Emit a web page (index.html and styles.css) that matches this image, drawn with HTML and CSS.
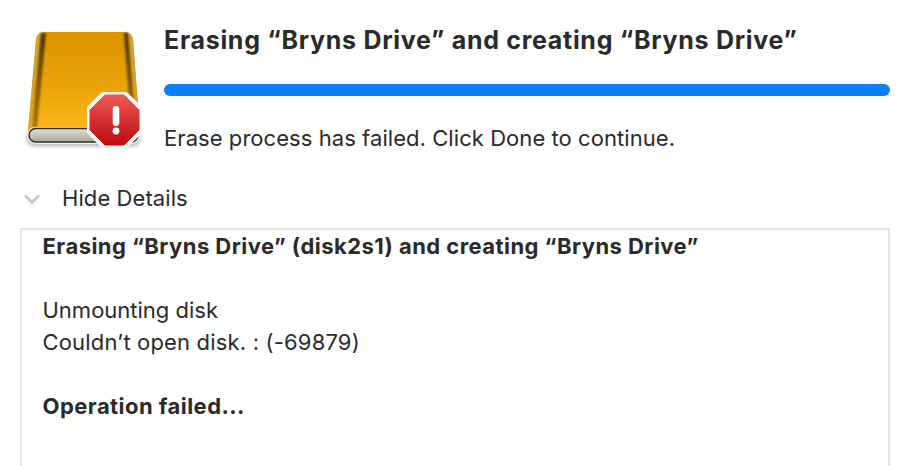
FILE: index.html
```html
<!DOCTYPE html>
<html lang="en">
<head>
<meta charset="utf-8">
<title>Erase</title>
<link rel="stylesheet" href="styles.css">
</head>
<body>
<div class="dialog">
  <header class="head">
    <div class="icon-cell">
      <svg class="drive" width="130" height="130" viewBox="20 24 130 130" aria-hidden="true">
        <defs>
          <linearGradient id="body" x1="0" y1="0" x2="0" y2="1">
            <stop offset="0" stop-color="#dc9400"/>
            <stop offset="0.55" stop-color="#eba309"/>
            <stop offset="1" stop-color="#fbb91f"/>
          </linearGradient>
          <linearGradient id="edgeL" x1="0" y1="0" x2="0" y2="1">
            <stop offset="0" stop-color="#4d3200"/>
            <stop offset="0.6" stop-color="#8a5c00"/>
            <stop offset="1" stop-color="#a87800"/>
          </linearGradient>
          <linearGradient id="base" x1="0" y1="0" x2="0" y2="1">
            <stop offset="0" stop-color="#e2e1da"/>
            <stop offset="1" stop-color="#a8a89e"/>
          </linearGradient>
          <linearGradient id="stopSign" x1="0" y1="0" x2="0" y2="1">
            <stop offset="0" stop-color="#ee5a54"/>
            <stop offset="1" stop-color="#bc090e"/>
          </linearGradient>
          <filter id="soft" x="-20%" y="-50%" width="140%" height="200%">
            <feGaussianBlur stdDeviation="1.500"/>
          </filter>
          <filter id="blurEdge" x="-100%" y="-5%" width="300%" height="110%">
            <feGaussianBlur stdDeviation="1"/>
          </filter>
        </defs>
        <rect x="26" y="130" width="115" height="17" rx="8.500" fill="#000" opacity="0.22" filter="url(#soft)"/>
        <path d="M36 40 Q37 32 46 32 H123 Q132 32 133 40 L140 131 H28 Z" fill="url(#body)"/>
        <path d="M36 40 Q37 32 44 32 L30 131 H28 Z" fill="#d8a32a"/>
        <path d="M133 40 Q132 32 125 32 L138 131 H140 Z" fill="#d8a32a"/>
        <path d="M41 33 L46 33 L37 128 L32 128 Z" fill="url(#edgeL)" filter="url(#blurEdge)"/>
        <path d="M124 33 L128 33 L136 128 L131 128 Z" fill="url(#edgeL)" filter="url(#blurEdge)"/>
        <rect x="27" y="127" width="113" height="17" rx="8.500" fill="#f2f2ec"/>
        <rect x="29" y="128.500" width="109" height="13.500" rx="6.750" fill="url(#base)" stroke="#2f2f2a" stroke-width="1.500"/>
        <path d="M104 92 H125 Q127 92 128.500 93.500 L140.500 105.500 Q142 107 142 109 V131 Q142 133 140.500 134.500 L128.500 146.500 Q127 148 125 148 H104 Q102 148 100.500 146.500 L88.500 134.500 Q87 133 87 131 V109 Q87 107 88.500 105.500 L100.500 93.500 Q102 92 104 92 Z" fill="#f7f7f7"/>
        <path d="M105 95 H124 L139 110 V130 L124 145 H105 L90 130 V110 Z" fill="url(#stopSign)" stroke="url(#stopSign)" stroke-width="1" stroke-linejoin="round"/>
        <rect x="112.700" y="106" width="6.600" height="20" rx="3.300" fill="#fff"/>
        <circle cx="116" cy="131" r="3.400" fill="#fff"/>
      </svg>
    </div>
    <div class="status">
      <h1 class="title">Erasing “Bryns Drive” and creating “Bryns Drive”</h1>
      <div class="bar"></div>
      <p class="message">Erase process has failed. Click Done to continue.</p>
    </div>
  </header>
  <div class="toggle">
    <svg class="chevron" width="18" height="12" viewBox="0 0 18 12" aria-hidden="true">
      <path d="M2 2.500 L9 9.500 L16 2.500" fill="none" stroke="#c4c4c4" stroke-width="2.500"/>
    </svg>
    <span class="toggle-label">Hide Details</span>
  </div>
  <section class="log">
    <p class="line strong">Erasing “Bryns Drive” (disk2s1) and creating “Bryns Drive”</p>
    <p class="line blank"></p>
    <p class="line">Unmounting disk</p>
    <p class="line figures">Couldn’t open disk. : (-69879)</p>
    <p class="line blank"></p>
    <p class="line strong">Operation failed...</p>
  </section>
</div>
</body>
</html>
```
FILE: styles.css
```css
* { box-sizing: border-box; }
html, body { margin: 0; height: 100%; background: #fff; overflow: hidden; }
body { font-family: Inter, "Liberation Sans", sans-serif; color: #2a2a2a; }
.dialog { height: 466px; padding: 24px 16px 0 20px; display: flex; flex-direction: column; }
.head { display: flex; height: 132px; }
.icon-cell { width: 144px; flex: none; }
.drive { display: block; }
.status { flex: 1; min-width: 0; }
.title { margin: 0; font-size: 25px; line-height: 32px; font-weight: 700; letter-spacing: 0.71px; }
.bar { margin-top: 28px; height: 12px; border-radius: 6px; background: #0880ff; }
.message { margin: 28px 0 0; font-size: 22px; line-height: 28px; letter-spacing: 0.06px; }
.toggle { display: flex; align-items: center; height: 30px; margin-top: 27px; }
.chevron { flex: none; margin: 2px 0 0 3px; }
.toggle-label { margin-left: 21px; font-size: 22px; line-height: 28px; letter-spacing: 0.08px; }
.log { flex: 1; margin-top: 15px; border: 2px solid #e3e3e3; border-bottom: 0; padding: 0 20.5px; }
.line { margin: 0; font-size: 22px; line-height: 32px; min-height: 32px; }
.figures { letter-spacing: 0.17px; }
.strong { font-weight: 700; letter-spacing: 0.45px; }
```
